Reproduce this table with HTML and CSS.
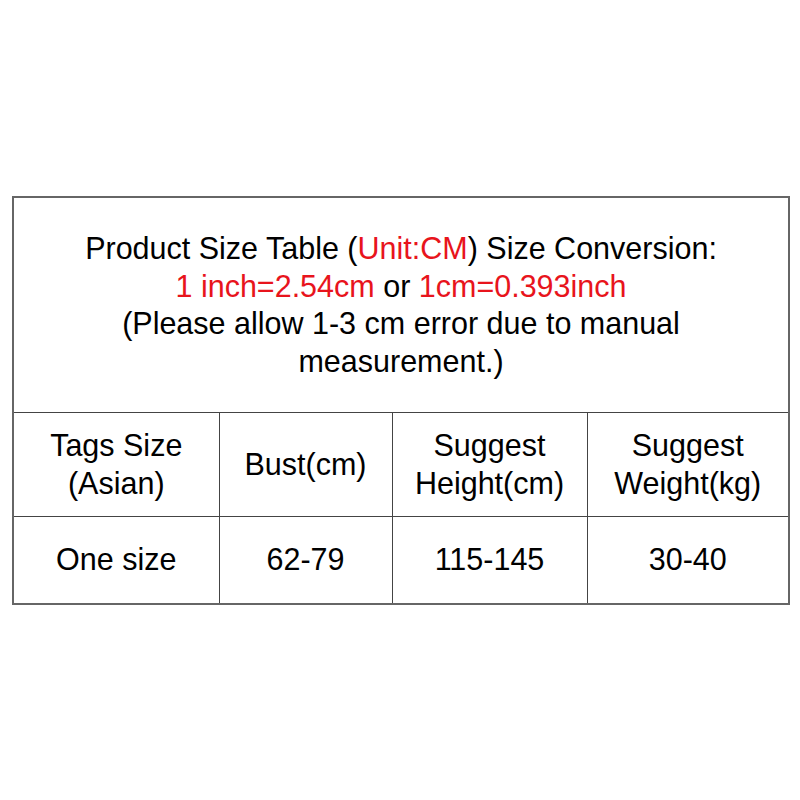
FILE: index.html
```html
<!DOCTYPE html>
<html>
<head>
<meta charset="utf-8">
<link rel="stylesheet" href="styles.css">
</head>
<body>
<table class="size-table">
  <colgroup>
    <col class="c1"><col class="c2"><col class="c3"><col class="c4">
  </colgroup>
  <tr class="head-row">
    <td colspan="4" class="title">Product Size Table (<span class="red">Unit:CM</span>) Size Conversion:<br><span class="red">1 inch=2.54cm</span> or <span class="red">1cm=0.393inch</span><br>(Please allow 1-3 cm error due to manual measurement.)</td>
  </tr>
  <tr class="label-row">
    <td>Tags Size<br>(Asian)</td>
    <td>Bust(cm)</td>
    <td>Suggest<br>Height(cm)</td>
    <td>Suggest<br>Weight(kg)</td>
  </tr>
  <tr class="value-row">
    <td>One size</td>
    <td>62-79</td>
    <td>115-145</td>
    <td>30-40</td>
  </tr>
</table>
</body>
</html>
```
FILE: styles.css
```css
html, body {
  margin: 0;
  padding: 0;
  background: #fff;
}
body {
  padding: 196px 0 0 12px;
  font-family: "Liberation Sans", Arial, sans-serif;
  color: #000;
}
.size-table {
  border-collapse: collapse;
  width: 776px;
  table-layout: fixed;
  border: 2px solid #666;
}
.c1 { width: 206px; }
.c2 { width: 173px; }
.c3 { width: 195px; }
.c4 { width: 202px; }
.size-table td {
  border: 1px solid #444;
  text-align: center;
  vertical-align: middle;
  font-size: 30.5px;
  line-height: 37.5px;
  padding: 0 6px;
}
.head-row td { height: 214px; padding: 0 50px; }
.label-row td { height: 103px; }
.value-row td { height: 86px; }
.red { color: #e8141c; }
```
